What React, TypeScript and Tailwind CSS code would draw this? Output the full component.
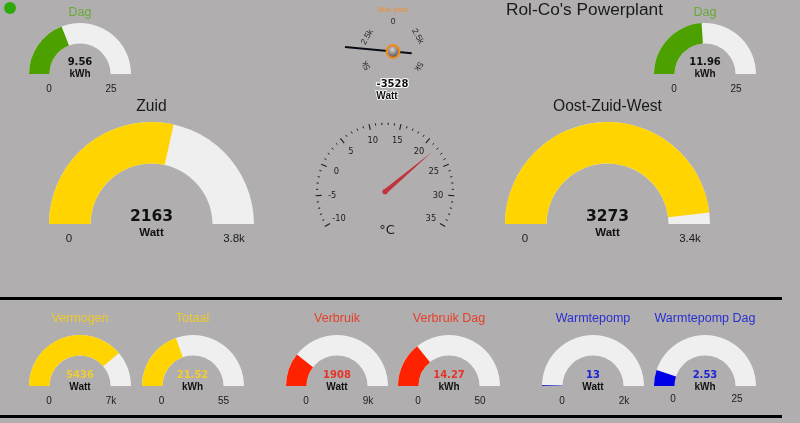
import React from "react";

const SANS = "font-['Liberation_Sans',Arial,sans-serif]";
const VERDANA = "font-['DejaVu_Sans',Verdana,sans-serif]";

function arc(R: number, r: number, frac: number) {
  const a = Math.PI * (1 - frac);
  const x1 = R + R * Math.cos(a);
  const y1 = R - R * Math.sin(a);
  const x2 = R + r * Math.cos(a);
  const y2 = R - r * Math.sin(a);
  return `M0 ${R} A${R} ${R} 0 0 1 ${x1} ${y1} L${x2} ${y2} A${r} ${r} 0 0 0 ${R - r} ${R} Z`;
}

type GaugeProps = {
  title: string;
  value: string;
  unit: string;
  min: string;
  max: string;
  frac: number;
  fill: string;
  big?: boolean;
  titleClass: string;
  valueClass?: string;
  labelClass?: string;
};

function Gauge({ title, value, unit, min, max, frac, fill, big, titleClass, valueClass = "text-[#111]", labelClass }: GaugeProps) {
  const R = big ? 102.5 : 51;
  const r = big ? 61 : 30.5;
  return (
    <div className={big ? "flex w-[205px] flex-col" : "flex w-[102px] flex-col"}>
      <div className={`whitespace-nowrap text-center ${titleClass}`}>{title}</div>
      <div className={big ? "relative h-[102.5px]" : "relative h-[51px]"}>
        <svg width={R * 2} height={R} viewBox={`0 0 ${R * 2} ${R}`} className="block">
          <path d={arc(R, r, 1)} fill="#efefef" />
          <path d={arc(R, r, frac)} fill={fill} />
        </svg>
        <div
          className={
            big
              ? `absolute left-0 right-0 top-[85px] text-center text-[15.5px] font-bold leading-[19px] ${VERDANA} ${valueClass}`
              : `absolute left-0 right-0 top-[33.5px] text-center text-[10px] font-bold leading-[12px] ${VERDANA} ${valueClass}`
          }
        >
          {value}
        </div>
        <div
          className={
            big
              ? `absolute left-0 right-0 top-[104px] text-center text-[11.5px] font-bold leading-[13px] text-[#111] ${SANS}`
              : `absolute left-0 right-0 top-[45.5px] text-center text-[10px] font-bold leading-[12px] text-[#111] ${SANS}`
          }
        >
          {unit}
        </div>
      </div>
      <div className={`flex justify-between text-[#1c1c1c] ${SANS} ${labelClass ?? (big ? "mt-[7.5px] text-[11.5px] leading-[12px]" : "mt-[9px] text-[10px] leading-[12px]")}`}>
        <span className="w-[40px] text-center">{min}</span>
        <span className="w-[40px] text-center">{max}</span>
      </div>
    </div>
  );
}

function MinPlusDial() {
  const labelFont = { fontFamily: "'Liberation Sans', Arial, sans-serif" };
  const cx = 123;
  const cy = 51.5;
  return (
    <svg width="220" height="104" viewBox="0 0 220 104" className="block">
      <defs>
        <radialGradient id="hub" cx="45%" cy="35%" r="70%">
          <stop offset="0%" stopColor="#d6d6d6" />
          <stop offset="100%" stopColor="#3f3f3f" />
        </radialGradient>
      </defs>
      <text x={cx} y="12" textAnchor="middle" fontSize="8" fill="#ee9030" style={labelFont}>Min-plus</text>
      <text x={cx} y="24" textAnchor="middle" fontSize="8.5" fill="#2a2a2a" style={labelFont}>0</text>
      <text textAnchor="middle" dominantBaseline="central" fontSize="8.5" fill="#2a2a2a" style={labelFont} transform="translate(96.7,36.7) rotate(-60)">2.5k</text>
      <text textAnchor="middle" dominantBaseline="central" fontSize="8.5" fill="#2a2a2a" style={labelFont} transform="translate(148.3,36) rotate(60)">2.5k</text>
      <text textAnchor="middle" dominantBaseline="central" fontSize="8.5" fill="#2a2a2a" style={labelFont} transform="translate(95.7,65.7) rotate(-120)">5k</text>
      <text textAnchor="middle" dominantBaseline="central" fontSize="8.5" fill="#2a2a2a" style={labelFont} transform="translate(149,66.7) rotate(120)">5k</text>
      <line x1="75" y1="47" x2="141.7" y2="53.2" stroke="#0a0d18" strokeWidth="2" />
      <circle cx={cx} cy={cy} r="6.3" fill="url(#hub)" stroke="#ee8a1e" strokeWidth="2.2" />
      <text x={cx - 0.5} y="86.5" textAnchor="middle" fontSize="10" fontWeight="700" fill="#111" stroke="#fff" strokeWidth="2.2" paintOrder="stroke" style={{ fontFamily: "'DejaVu Sans', Verdana, sans-serif" }}>-3528</text>
      <text x={cx - 6} y="98.5" textAnchor="middle" fontSize="10" fontWeight="700" fill="#111" stroke="#fff" strokeWidth="1.6" paintOrder="stroke" style={labelFont}>Watt</text>
    </svg>
  );
}

function Thermometer() {
  const cx = 115;
  const cy = 87.7;
  const ticks: React.ReactNode[] = [];
  const labels = ["-10", "-5", "0", "5", "10", "15", "20", "25", "30", "35"];
  const total = 45;
  for (let i = 0; i <= total; i++) {
    const a = ((-120 + (240 * i) / total) * Math.PI) / 180;
    const major = i % 5 === 0;
    const r1 = major ? 69.5 : 69;
    const r2 = major ? 63.5 : 66.8;
    ticks.push(
      <line
        key={i}
        x1={cx + r1 * Math.sin(a)}
        y1={cy - r1 * Math.cos(a)}
        x2={cx + r2 * Math.sin(a)}
        y2={cy - r2 * Math.cos(a)}
        stroke="#1e1e1e"
        strokeWidth={major ? 1.1 : 1}
      />
    );
  }
  return (
    <svg width="220" height="134" viewBox="0 0 220 134" className="block">
      {ticks}
      {labels.map((l, i) => {
        const a = ((-120 + (240 * i) / 9) * Math.PI) / 180;
        const rr = 53;
        return (
          <text
            key={l}
            x={cx + rr * Math.sin(a)}
            y={cy - rr * Math.cos(a) + 3}
            textAnchor="middle"
            fontSize="8.3"
            fill="#222"
            style={{ fontFamily: "'DejaVu Sans', Verdana, sans-serif" }}
          >
            {l}
          </text>
        );
      })}
      <polygon points={`${cx - 1.5},${cy - 1.8} ${cx + 46.7},${cy - 39.4} ${cx + 1.5},${cy + 1.8}`} fill="#c1343d" />
      <circle cx={cx} cy={cy} r="2.6" fill="#c1343d" />
      <text x={cx + 2} y="130" textAnchor="middle" fontSize="13" fill="#1c1c1c" style={{ fontFamily: "'DejaVu Sans', Verdana, sans-serif" }}>°C</text>
    </svg>
  );
}

const smallTop = `${SANS} h-[22.5px] text-[12.5px] leading-[25px] text-[#6aa839]`;
const bottomTitle = `${SANS} mt-[6px] mb-[4px] h-[25px] text-[12.5px] leading-[24px]`;
const bigTitle = "h-[27px] text-[15.6px] leading-[22px] text-[#1a1a1a]";

export default function App() {
  return (
    <div className="h-[423px] w-[800px] overflow-hidden bg-[#b0aeae]">
      <div className={`relative blur-[0.25px] ${SANS}`}>
        <div className="absolute left-[4px] top-[2px] h-[12px] w-[12px] rounded-full bg-[#2fa80c]" />

        <div className="flex h-[297px]">
          <div className="flex w-[270px] flex-col">
            <div className="ml-[29px]">
              <Gauge title="Dag" value="9.56" unit="kWh" min="0" max="25" frac={9.56 / 25} fill="#4ca000" titleClass={smallTop} />
            </div>
            <div className="ml-[49px]">
              <Gauge big title="Zuid" value="2163" unit="Watt" min="0" max="3.8k" frac={2163 / 3800} fill="#ffd400" titleClass={bigTitle} />
            </div>
          </div>

          <div className="flex w-[220px] flex-col">
            <MinPlusDial />
            <Thermometer />
          </div>

          <div className="flex w-[310px] flex-col">
            <div className="flex">
              <div className="h-[20px] w-[173px] flex-none whitespace-nowrap pl-[16px] text-[17.3px] leading-[18px] text-[#1a1a1a]">Rol-Co's Powerplant</div>
              <div className="-ml-[9px]">
                <Gauge title="Dag" value="11.96" unit="kWh" min="0" max="25" frac={11.96 / 25} fill="#4ca000" titleClass={smallTop} />
              </div>
            </div>
            <div className="ml-[15px]">
              <Gauge big title="Oost-Zuid-West" value="3273" unit="Watt" min="0" max="3.4k" frac={3273 / 3400} fill="#ffd400" titleClass={bigTitle} />
            </div>
          </div>
        </div>

        <div className="flex h-[120.5px] w-[782px] border-y-[3px] border-black">
          <div className="ml-[29px] flex gap-[10.5px]">
            <Gauge title="Vermogen" value="5436" unit="Watt" min="0" max="7k" frac={5436 / 7000} fill="#ffd400" titleClass={`${bottomTitle} text-[#eccb2e]`} valueClass="text-[#f0cd30]" />
            <Gauge title="Totaal" value="21.52" unit="kWh" min="0" max="55" frac={21.52 / 55} fill="#ffd400" titleClass={`${bottomTitle} text-[#eccb2e]`} valueClass="text-[#f0cd30]" />
          </div>
          <div className="ml-[42.5px] flex gap-[10px]">
            <Gauge title="Verbruik" value="1908" unit="Watt" min="0" max="9k" frac={1908 / 9000} fill="#ff2200" titleClass={`${bottomTitle} text-[#e5402c]`} valueClass="text-[#e5352a]" />
            <Gauge title="Verbruik Dag" value="14.27" unit="kWh" min="0" max="50" frac={14.27 / 50} fill="#ff2200" titleClass={`${bottomTitle} text-[#e5402c]`} valueClass="text-[#e5352a]" />
          </div>
          <div className="ml-[42px] flex gap-[10px]">
            <Gauge title="Warmtepomp" value="13" unit="Watt" min="0" max="2k" frac={13 / 2000} fill="#2a2fc8" titleClass={`${bottomTitle} text-[#2a30d0]`} valueClass="text-[#1c22d6]" />
            <Gauge title="Warmtepomp Dag" value="2.53" unit="kWh" min="0" max="25" frac={2.53 / 25} fill="#0000e6" titleClass={`${bottomTitle} text-[#2a30d0]`} valueClass="text-[#1c22d6]" labelClass="-mx-[1px] mt-[7px] text-[10px] leading-[12px]" />
          </div>
        </div>
      </div>
    </div>
  );
}
